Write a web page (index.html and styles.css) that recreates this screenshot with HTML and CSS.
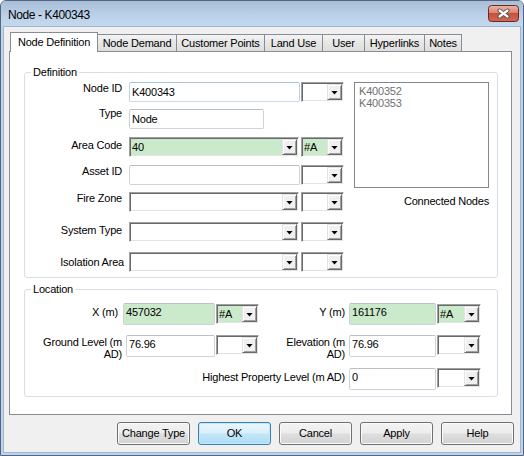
FILE: index.html
```html
<!DOCTYPE html>
<html>
<head>
<meta charset="utf-8">
<link rel="stylesheet" href="styles.css">
</head>
<body>
<div class="window">
  <div class="titlebar">
    <span class="title">Node - K400343</span>
    <div class="close">
      <svg width="31" height="17" viewBox="0 0 31 17">
        <defs>
          <linearGradient id="cg" x1="0" y1="0" x2="0" y2="1">
            <stop offset="0" stop-color="#ebb5a8"/>
            <stop offset="0.5" stop-color="#d9806e"/>
            <stop offset="0.5" stop-color="#c8503d"/>
            <stop offset="1" stop-color="#cf6a55"/>
          </linearGradient>
        </defs>
        <rect x="0.5" y="0.5" width="30" height="16" rx="3" fill="url(#cg)" stroke="#70281d"/>
        <path d="M11.5 5.5 L19.5 11.5 M19.5 5.5 L11.5 11.5" stroke="#4a4a4a" stroke-width="4" stroke-linecap="round"/>
        <path d="M11.5 5.5 L19.5 11.5 M19.5 5.5 L11.5 11.5" stroke="#ffffff" stroke-width="2.2" stroke-linecap="round"/>
      </svg>
    </div>
  </div>
  <div class="client">
    <div class="tabs">
      <div class="tab active t1">Node Definition</div>
      <div class="tab t2">Node Demand</div>
      <div class="tab t3">Customer Points</div>
      <div class="tab t4">Land Use</div>
      <div class="tab t5">User</div>
      <div class="tab t6">Hyperlinks</div>
      <div class="tab t7">Notes</div>
    </div>
    <div class="panel">
      <fieldset class="group def">
        <legend>Definition</legend>
        <div class="def-body">
          <div class="def-form">
            <div class="row">
              <span class="lbl">Node ID</span>
              <div class="textbox hot w171">K400343</div>
              <div class="combo small"><span class="val"></span><span class="btn"></span></div>
            </div>
            <div class="row g7">
              <span class="lbl om2">Type</span>
              <div class="textbox w135">Node</div>
            </div>
            <div class="row g8">
              <span class="lbl o2">Area Code</span>
              <div class="combo green w170"><span class="val">40</span><span class="btn"></span></div>
              <div class="combo small green"><span class="val">#A</span><span class="btn"></span></div>
            </div>
            <div class="row g8">
              <span class="lbl">Asset ID</span>
              <div class="textbox w171"></div>
              <div class="combo small"><span class="val"></span><span class="btn"></span></div>
            </div>
            <div class="row g7">
              <span class="lbl">Fire Zone</span>
              <div class="combo w170"><span class="val"></span><span class="btn"></span></div>
              <div class="combo small"><span class="val"></span><span class="btn"></span></div>
            </div>
            <div class="row g10">
              <span class="lbl o2">System Type</span>
              <div class="combo w170"><span class="val"></span><span class="btn"></span></div>
              <div class="combo small"><span class="val"></span><span class="btn"></span></div>
            </div>
            <div class="row g10">
              <span class="lbl iso o4">Isolation Area</span>
              <div class="combo w170"><span class="val"></span><span class="btn"></span></div>
              <div class="combo small"><span class="val"></span><span class="btn"></span></div>
            </div>
          </div>
          <div class="def-side">
            <div class="listbox">
              <div>K400352</div>
              <div>K400353</div>
            </div>
            <div class="side-label">Connected Nodes</div>
          </div>
        </div>
      </fieldset>
      <fieldset class="group loc">
        <legend>Location</legend>
        <div class="lrow r1">
          <span class="llbl lx">X (m)</span>
          <div class="ltb green w92">457032</div>
          <div class="combo lcombo w43 green"><span class="val">#A</span><span class="btn"></span></div>
          <span class="rlbl one">Y (m)</span>
          <div class="ltb green w87">161176</div>
          <div class="combo lcombo w44 green"><span class="val">#A</span><span class="btn"></span></div>
        </div>
        <div class="lrow r2">
          <span class="llbl lg">Ground Level (m<br>AD)</span>
          <div class="ltb w89">76.96</div>
          <div class="combo lcombo w43"><span class="val"></span><span class="btn"></span></div>
          <span class="rlbl two">Elevation (m<br>AD)</span>
          <div class="ltb w87">76.96</div>
          <div class="combo lcombo w44"><span class="val"></span><span class="btn"></span></div>
        </div>
        <div class="lrow r3">
          <span class="hlbl">Highest Property Level (m AD)</span>
          <div class="ltb w87">0</div>
          <div class="combo lcombo w44"><span class="val"></span><span class="btn"></span></div>
        </div>
      </fieldset>
    </div>
    <div class="btnrow">
      <div class="pbtn">Change Type</div>
      <div class="pbtn default">OK</div>
      <div class="pbtn">Cancel</div>
      <div class="pbtn">Apply</div>
      <div class="pbtn">Help</div>
    </div>
  </div>
</div>
</body>
</html>
```
FILE: styles.css
```css
html, body {
  margin: 0;
  padding: 0;
  background: #ffffff;
}
body {
  font-family: "Liberation Sans", Arial, sans-serif;
  font-size: 11px;
  letter-spacing: -0.2px;
  color: #000;
}
.window {
  width: 524px;
  height: 456px;
  box-sizing: border-box;
  border: 1px solid #53667e;
  border-radius: 6px 6px 0 0;
  background: #bdd4ec;
  display: flex;
  flex-direction: column;
  overflow: hidden;
}
.titlebar {
  height: 26px;
  flex: none;
  display: flex;
  align-items: center;
  padding-left: 7px;
  background: linear-gradient(#a9bfd9, #bcd2ea 60%, #c5d9ef);
}
.title {
  flex: 1;
  font-size: 12px;
  letter-spacing: -0.4px;
  padding-top: 1px;
}
.close {
  width: 31px;
  height: 17px;
  align-self: flex-start;
  margin-top: 4px;
  margin-right: 4px;
}
.close svg { display: block; }
.client {
  flex: 1;
  margin: 0 3px 3px;
  background: #f0f0f0;
  padding-top: 5px;
  display: flex;
  flex-direction: column;
  box-shadow: 0 0 0 1px #9fb6d0;
}
/* tabs */
.tabs {
  display: flex;
  align-items: flex-end;
  height: 20px;
  margin-left: 6px;
  margin-bottom: -1px;
  position: relative;
  z-index: 1;
}
.tab {
  height: 17px;
  box-sizing: border-box;
  border: 1px solid #898c95;
  border-bottom: none;
  background: linear-gradient(#f4f4f4, #e6e6e6 50%, #dedede);
  margin-left: -1px;
  margin-bottom: 1px;
  display: flex;
  align-items: center;
  justify-content: center;
  line-height: 13px;
  white-space: nowrap;
  flex: none;
}
.tab.active {
  height: 20px;
  margin-bottom: 0;
  margin-left: 0;
  background: #ffffff;
  position: relative;
  z-index: 2;
  padding-bottom: 1px;
}
.t1 { width: 88px; }
.t2 { width: 80px; }
.t3 { width: 89px; }
.t4 { width: 59px; }
.t5 { width: 43px; }
.t6 { width: 61px; }
.t7 { width: 38px; }
.panel {
  margin-left: 5px;
  width: 503px;
  height: 364px;
  box-sizing: border-box;
  border: 1px solid #898c95;
  background: #ffffff;
}
/* group boxes */
.group {
  margin: 0 0 0 14px;
  padding: 0;
  width: 474px;
  min-width: 0;
  box-sizing: border-box;
  border: 1px solid #d5dfe5;
  border-radius: 3px;
}
.group legend {
  padding: 0 2px;
  margin-left: 6px;
  line-height: 14px;
}
.def {
  margin-top: 13px;
  padding-bottom: 5px;
}
.loc {
  margin-top: 4px;
  padding-bottom: 6px;
}
.def-body {
  display: flex;
  padding-top: 3px;
}
.def-form {
  width: 319px;
  flex: none;
}
.row {
  display: flex;
  align-items: flex-start;
  height: 20px;
}
.g7 { margin-top: 7px; }
.g8 { margin-top: 8px; }
.g10 { margin-top: 10px; }
.lbl {
  width: 97px;
  margin-right: 7px;
  text-align: right;
  line-height: 13px;
  white-space: nowrap;
  flex: none;
}
.lbl.iso { width: 99px; margin-right: 5px; }
.om2 { margin-top: -2px; }
.o2 { margin-top: 2px; }
.o4 { margin-top: 4px; }
.textbox {
  box-sizing: border-box;
  height: 20px;
  border: 1px solid #cfd2d7;
  border-top-color: #b9bcc2;
  border-radius: 2px;
  background: #fff;
  padding: 0 2px;
  line-height: 18px;
  flex: none;
  white-space: nowrap;
}
.textbox.hot {
  border-color: #a3c2de #b8d4ea #c6dcee #b8d4ea;
}
.w171 { width: 171px; }
.w170 { width: 170px; }
.w135 { width: 135px; }
.w92 { width: 92px; }
.w89 { width: 89px; }
.w87 { width: 87px; }
.w43 { width: 43px; }
.w44 { width: 44px; }
.combo {
  box-sizing: border-box;
  height: 20px;
  display: flex;
  border: 1px solid;
  border-color: #a0a0a0 #ffffff #ffffff #a0a0a0;
  box-shadow: inset 1px 1px #696969, inset -1px -1px #e3e3e3;
  background: #ffffff;
  padding: 1px;
  flex: none;
}
.combo.small {
  width: 43px;
  margin-left: auto;
}
.combo.green { background: #cbeacb; }
.combo .val {
  flex: 1;
  padding-left: 1px;
  line-height: 16px;
  white-space: nowrap;
  overflow: hidden;
}
.combo .btn {
  width: 15px;
  flex: none;
  box-sizing: border-box;
  border: 1px solid;
  border-color: #e3e3e3 #696969 #696969 #e3e3e3;
  box-shadow: inset 1px 1px #ffffff, inset -1px -1px #a0a0a0;
  background: #f0f0f0;
  display: flex;
  align-items: center;
  justify-content: center;
}
.combo .btn::after {
  content: "";
  width: 7px;
  height: 4px;
  margin-top: 1px;
  background: #000;
  clip-path: polygon(0 0, 100% 0, 50% 100%);
}
.def-side {
  margin-left: 10px;
  width: 135px;
  flex: none;
}
.listbox {
  box-sizing: border-box;
  width: 135px;
  height: 106px;
  border: 1px solid #828790;
  background: #fff;
  color: #6f6f6f;
  padding: 2px 4px;
  line-height: 12px;
}
.side-label {
  margin-top: 6px;
  text-align: right;
  line-height: 14px;
  white-space: nowrap;
}
/* location */
.lrow {
  display: flex;
  align-items: flex-start;
  width: 456px;
  height: 22px;
}
.r1 { margin-top: 7px; }
.r2 { margin-top: 10px; }
.r3 { margin-top: 11px; }
.llbl, .rlbl, .hlbl {
  text-align: right;
  white-space: nowrap;
  flex: none;
}
.llbl.lx { width: 93px; margin-right: 5px; margin-top: 3px; line-height: 13px; }
.llbl.lg { width: 97px; margin-right: 4px; margin-top: 1px; line-height: 12px; }
.rlbl { width: 86px; margin-right: 4px; }
.rlbl.one { margin-top: 3px; line-height: 13px; }
.rlbl.two { margin-top: 1px; line-height: 12px; }
.hlbl { margin-left: auto; margin-right: 4px; margin-top: 3px; line-height: 13px; }
.ltb {
  box-sizing: border-box;
  height: 22px;
  border: 1px solid #cfd2d7;
  border-top-color: #bdc0c6;
  border-radius: 2px;
  background: #fff;
  padding: 2px 2px 0;
  line-height: 13px;
  flex: none;
}
.ltb.green { background: #cbeacb; }
.lcombo { margin-left: 1px; }
.r1 .lcombo { margin-top: 1px; }
/* buttons */
.btnrow {
  display: flex;
  gap: 8px;
  padding-left: 113px;
  margin-top: 7px;
}
.pbtn {
  width: 73px;
  height: 23px;
  box-sizing: border-box;
  border: 1px solid #707070;
  border-radius: 3px;
  background: linear-gradient(#f3f3f3 0%, #ececec 48%, #dedede 52%, #d3d3d3 100%);
  box-shadow: inset 0 0 0 1px #fbfbfb;
  display: flex;
  align-items: center;
  justify-content: center;
  line-height: 13px;
  white-space: nowrap;
  flex: none;
}
.pbtn.default {
  border-color: #3c7fb1;
  background: linear-gradient(#eaf6fd 0%, #d9f0fc 48%, #c2e6fa 52%, #aedcf5 100%);
  box-shadow: inset 0 0 0 1px #c4e8fb;
}
```
